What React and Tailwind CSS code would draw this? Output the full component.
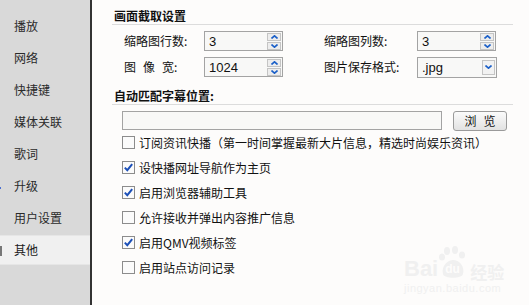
import React from "react";

const cjk = "font-['Noto_Sans_CJK_SC',sans-serif]";

function ArrowUp() {
  return (
    <svg width="7" height="4" viewBox="0 0 7 4">
      <path d="M0.5 3.5 L3.5 0.8 L6.5 3.5" stroke="#1a5fc8" strokeWidth="1.6" fill="none" />
    </svg>
  );
}
function ArrowDown() {
  return (
    <svg width="7" height="4" viewBox="0 0 7 4">
      <path d="M0.5 0.5 L3.5 3.2 L6.5 0.5" stroke="#1a5fc8" strokeWidth="1.6" fill="none" />
    </svg>
  );
}

function Spin({ value }) {
  return (
    <div className="w-[79px] h-[20px] border border-[#a3a3a3] bg-[#f8f8f7] flex items-center justify-between pl-[4px] pr-[1px]">
      <span className="font-['Liberation_Sans',sans-serif] text-[13px] leading-none text-[#111]">{value}</span>
      <div className="flex flex-col gap-[1px]">
        <div className="w-[14px] h-[8px] border border-[#c4c4c4] bg-[#ededed] flex items-center justify-center">
          <ArrowUp />
        </div>
        <div className="w-[14px] h-[8px] border border-[#c4c4c4] bg-[#ededed] flex items-center justify-center">
          <ArrowDown />
        </div>
      </div>
    </div>
  );
}

function Select({ value }) {
  return (
    <div className="w-[80px] h-[21px] border border-[#a3a3a3] bg-[#f8f8f7] flex items-center justify-between pl-[4px] pr-[1px]">
      <span className="font-['Liberation_Sans',sans-serif] text-[13px] leading-none text-[#111]">{value}</span>
      <div className="w-[13px] h-[15px] border border-[#c4c4c4] bg-[#f2f2f2] flex items-center justify-center">
        <ArrowDown />
      </div>
    </div>
  );
}

function Check({ checked, label }) {
  return (
    <div className="h-[25px] flex items-center pl-[10px]">
      <div className="w-[13px] h-[13px] border border-[#8c8c8c] bg-[#fbfbfb] flex items-center justify-center shrink-0">
        {checked && (
          <svg width="11" height="11" viewBox="0 0 11 11">
            <path d="M1.8 5.6 L4.3 8.2 L9.2 2.2" stroke="#1b4fb8" strokeWidth="2" fill="none" />
          </svg>
        )}
      </div>
      <span className="ml-[4px] text-[12px] leading-4 text-[#111] whitespace-nowrap">{label}</span>
    </div>
  );
}

const navItems = ["播放", "网络", "快捷键", "媒体关联", "歌词", "升级", "用户设置"];

export default function App() {
  return (
    <div className={`relative w-[529px] h-[305px] flex overflow-hidden bg-[#fdfcfb] ${cjk}`}>
      {/* sidebar */}
      <div className="relative w-[92px] h-full bg-[#d9d9d9] border-r-2 border-[#333] pt-[10px] shrink-0">
        {navItems.map((t) => (
          <div key={t} className="h-[32px] flex items-center pl-[14px] text-[12px] text-[#2a2a2a]">
            {t}
          </div>
        ))}
        <div className="h-[32px] flex items-center">
          <div className="relative w-[90px] h-[30px] bg-[#f0f0f0] border-y border-[#e6e6e6] flex items-center pl-[14px] text-[12px] text-[#1a1a1a]">
            <div className="absolute left-0 top-[10px] w-[2px] h-[10px] bg-[#777]" />
            其他
          </div>
        </div>
        <div className="absolute left-0 top-[187px] w-[1px] h-[2px] bg-[#4a6fd0]" />
      </div>

      {/* main */}
      <div className="flex-1 pl-[20px] pr-[16px] flex flex-col">
        <div className="h-[25px] pt-[8px] pl-[2px] border-b border-[#dcdcdc] text-[12px] leading-4 font-bold text-[#111]">
          画面截取设置
        </div>

        <div className="mt-[6px] flex flex-col gap-[6px] pl-[12px]">
          <div className="h-[20px] flex items-center">
            <span className="w-[80px] text-[12px] text-[#111]">缩略图行数:</span>
            <Spin value="3" />
            <span className="ml-[41px] w-[93px] text-[12px] text-[#111]">缩略图列数:</span>
            <Spin value="3" />
          </div>
          <div className="h-[20px] flex items-center">
            <span className="w-[80px] text-[12px] text-[#111] flex">
              <span className="mr-[7px]">图</span>
              <span className="mr-[7px]">像</span>
              <span>宽:</span>
            </span>
            <Spin value="1024" />
            <span className="ml-[41px] w-[93px] text-[12px] text-[#111]">图片保存格式:</span>
            <Select value=".jpg" />
          </div>
        </div>

        <div className="mt-[11px] h-[17px] pl-[2px] border-b border-[#dcdcdc] text-[12px] leading-4 font-bold text-[#111]">
          自动匹配字幕位置:
        </div>

        <div className="mt-[6px] h-[19px] flex items-center pl-[10px]">
          <div className="w-[320px] h-[19px] border border-[#a3a3a3] bg-[#f8f8f7]" />
          <button className="ml-[11px] w-[54px] h-[20px] rounded-[3px] border border-[#9a9a9a] bg-gradient-to-b from-[#fbfbfb] to-[#e2e2e2] text-[12px] leading-none text-[#111] flex items-center justify-center">
            浏<span className="ml-[7px]">览</span>
          </button>
        </div>

        <div className="flex flex-col">
          <Check checked={false} label="订阅资讯快播（第一时间掌握最新大片信息，精选时尚娱乐资讯）" />
          <Check checked label="设快播网址导航作为主页" />
          <Check checked label="启用浏览器辅助工具" />
          <Check checked={false} label="允许接收并弹出内容推广信息" />
          <Check checked label="启用QMV视频标签" />
          <Check checked={false} label="启用站点访问记录" />
        </div>
      </div>

      {/* watermark */}
      <div className="absolute left-[404px] top-[246px] pointer-events-none text-[#f0f0f0] flex flex-col">
        <div className="flex items-end h-[34px]">
          <span className="font-['Liberation_Sans',sans-serif] font-bold text-[22px] leading-none">Bai</span>
          <span className="relative w-[30px] h-[34px]">
            <svg width="30" height="34" viewBox="0 0 30 34" className="absolute inset-0">
              <ellipse cx="9" cy="5" rx="3" ry="4" fill="#f0f0f0" />
              <ellipse cx="17" cy="4" rx="3" ry="4" fill="#f0f0f0" />
              <ellipse cx="24" cy="9" rx="3" ry="3.5" fill="#f0f0f0" />
              <ellipse cx="4" cy="11" rx="3" ry="3.5" fill="#f0f0f0" />
              <path d="M5 28 C3 20 10 14 15 14 C21 14 27 20 25 28 C24 33 6 33 5 28 Z" fill="#f0f0f0" />
            </svg>
            <span className="absolute left-[7px] top-[17px] font-['Liberation_Sans',sans-serif] font-bold text-[12px] leading-none text-[#fdfcfb]">du</span>
          </span>
          <span className="ml-[2px] text-[17px] leading-none font-bold">经验</span>
        </div>
        <div className="mt-[3px] font-['Liberation_Sans',sans-serif] text-[11px] leading-none tracking-[0.5px]">jingyan.baidu.com</div>
      </div>
    </div>
  );
}
